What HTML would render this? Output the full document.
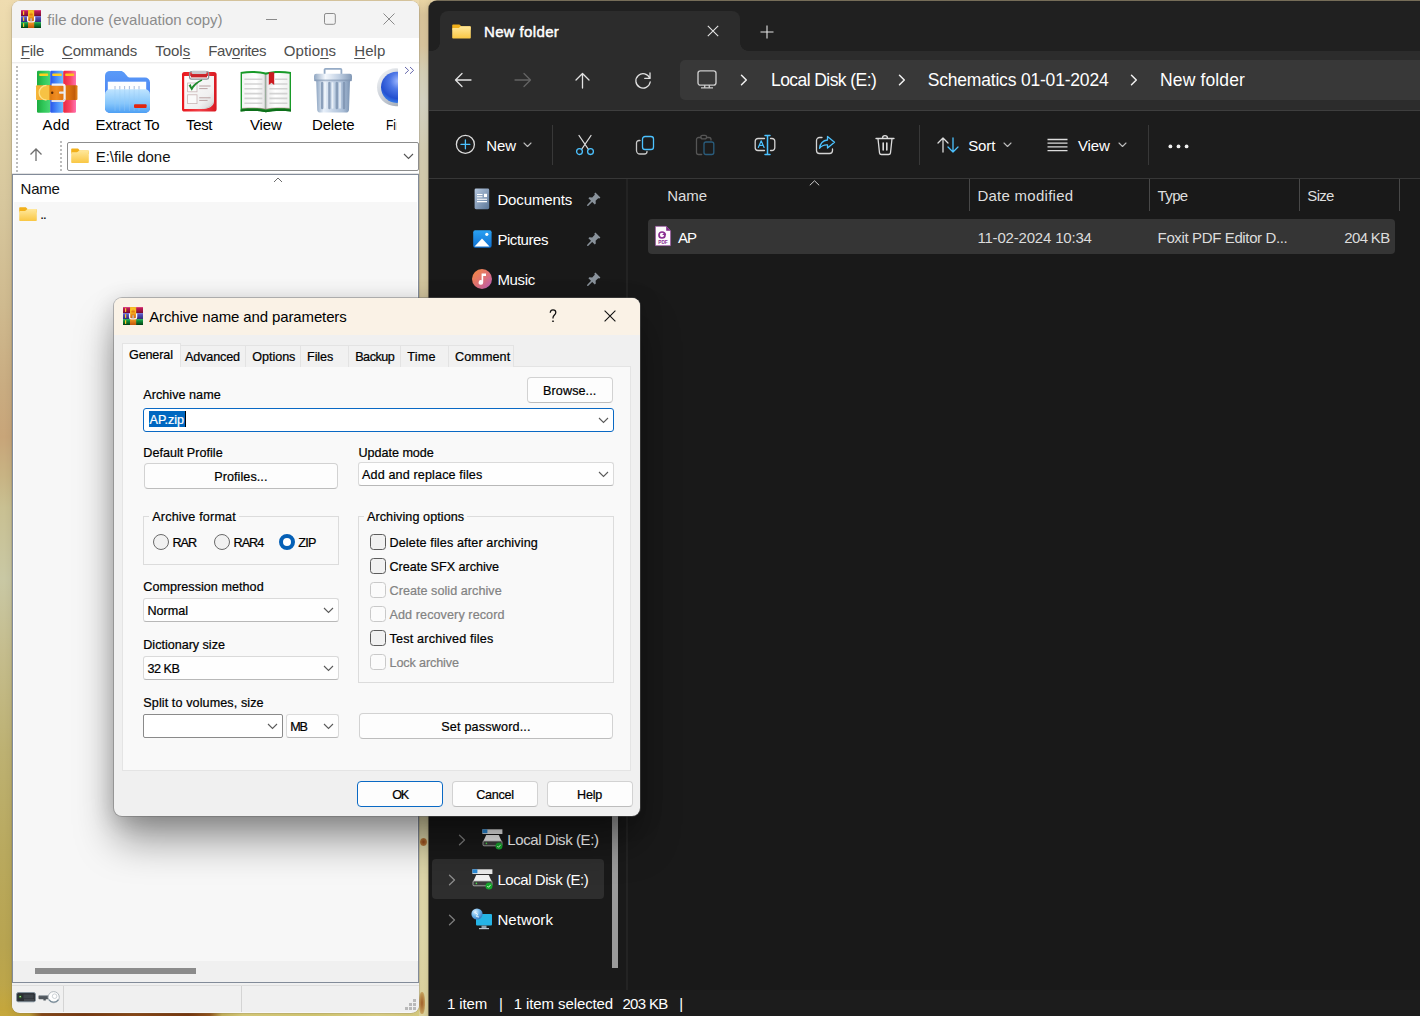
<!DOCTYPE html>
<html><head><meta charset="utf-8"><title>screen</title>
<style>
*{box-sizing:border-box;margin:0;padding:0}
html,body{width:1420px;height:1016px;overflow:hidden;background:#1a1a1a}
body{position:relative;font-family:"Liberation Sans",sans-serif;}
.a{position:absolute}
.t{position:absolute;white-space:pre;line-height:20px;height:20px;font-family:"Liberation Sans",sans-serif;}
.t u{text-decoration:underline;text-underline-offset:2px;text-decoration-thickness:1px}
svg{position:absolute;overflow:visible}
.btn{position:absolute;background:#fdfdfd;border:1px solid #d2d2d2;border-bottom-color:#bdbdbd;border-radius:4px}
.cmb{position:absolute;background:#fefefe;border:1px solid #dadada;border-bottom-color:#b8b8b8;border-radius:3px}
.cb{position:absolute;width:15.500px;height:15.500px;border:1px solid #5c5c5c;border-radius:3.5px;background:#f1f1f1}
.cb.d{border-color:#c9c9c9;background:#fbfbfb}
.rd{position:absolute;width:16px;height:16px;border:1px solid #6a6a6a;border-radius:50%;background:#f1f1f1}
.grp{position:absolute;border:1px solid #dcdcdc}
.tab{position:absolute;top:345px;height:22px;background:#f1f1f1;border:1px solid #e3e3e3;border-bottom:none}
.vd{position:absolute;width:1px;background:#484848}
</style></head><body>

<!-- wallpaper -->
<div class="a" style="left:0;top:0;width:1420px;height:1016px;background:linear-gradient(180deg,#efdcb0 0%,#e8d8aa 6%,#decfa4 12%,#d7c79d 20%,#cfba8f 30%,#c9ac81 38%,#c8a579 43%,#c8b484 47%,#c9c092 50%,#c9c8a4 57%,#c5bd8e 64%,#bdb172 74%,#b9a95e 84%,#b8a450 93%,#bea648 98%,#c4a840 100%)"></div>
<div class="a" style="left:419px;top:0;width:12px;height:1016px;background:linear-gradient(180deg,#e8d4a4 0%,#dcc79c 1.500%,#dcc8a0 4.500%,#d8d2b8 7%,#d8d6c6 10%,#d6cfb4 15%,#d6c8a0 29%,#d8cca0 60%,#e0d9ac 81%,#e2daac 92%,#ded49e 100%)"></div>
<div class="a" style="left:0;top:1008px;width:419px;height:8px;background:linear-gradient(90deg,#c6a83c 0,#c2a23a 7%,#8a4a1a 10%,#7c3c12 20%,#8c4a18 32%,#7a3a10 45%,#96561e 50%,#c8b45c 53%,#dccf7c 58%,#d8cc74 75%,#e0d488 90%,#d8cc80 100%)"></div><div class="a" style="left:0;top:985px;width:12px;height:26px;background:linear-gradient(180deg,rgba(190,160,60,0),#c4a63c)"></div>
<div class="a" style="left:420px;top:838px;width:7px;height:8px;border-radius:50%;background:radial-gradient(#9a4a1c,#b8783a 60%,rgba(200,170,110,0) 100%)"></div><div class="a" style="left:419px;top:992px;width:6px;height:22px;border-radius:40%;background:radial-gradient(#a4602a,#c49a56 60%,rgba(210,190,130,0) 100%)"></div>
<svg width="0" height="0" style="left:-10px;top:-10px"><defs>
  <linearGradient id="gFold" x1="0" y1="0" x2="0" y2="1"><stop offset="0" stop-color="#ffe89c"/><stop offset="1" stop-color="#f9c744"/></linearGradient>
  <g id="fold"><path d="M1 .4h5.300c.4 0 .7.150 1 .45L8.800 2.400H17a.8.800 0 0 1 .8.800V6H.2V1.200A.8.800 0 0 1 1 .4z" fill="#f2b01a"/><path d="M.2 5.100c0-.5.400-.9.900-.9h4.700c.4 0 .7-.150 1-.45l1.100-1.050c.3-.3.600-.45 1-.45H17a.8.800 0 0 1 .8.800v11.150a.8.800 0 0 1-.8.800H1a.8.800 0 0 1-.8-.8z" fill="url(#gFold)"/></g>
  <linearGradient id="rk1" x1="0" y1="0" x2="0" y2="1"><stop offset="0" stop-color="#e2508e"/><stop offset=".25" stop-color="#bb1a54"/><stop offset=".8" stop-color="#8a1038"/><stop offset="1" stop-color="#6e0c2c"/></linearGradient>
  <linearGradient id="rk2" x1="0" y1="0" x2="0" y2="1"><stop offset="0" stop-color="#7471d6"/><stop offset=".35" stop-color="#4d4bb6"/><stop offset="1" stop-color="#302e78"/></linearGradient>
  <linearGradient id="rk3" x1="0" y1="0" x2="0" y2="1"><stop offset="0" stop-color="#36bc64"/><stop offset=".3" stop-color="#10903e"/><stop offset=".8" stop-color="#07581f"/><stop offset="1" stop-color="#033a12"/></linearGradient>
  <linearGradient id="rk4" x1="0" y1="0" x2="0" y2="1"><stop offset="0" stop-color="#f2b828"/><stop offset=".35" stop-color="#ee9a1c"/><stop offset=".6" stop-color="#d86c0e"/><stop offset=".75" stop-color="#e88c1e"/><stop offset="1" stop-color="#c4560c"/></linearGradient>
  <g id="rarico">
    <rect x="0" y="0" width="20" height="6.100" fill="url(#rk1)"/>
    <rect x="0" y="6.100" width="20" height="5.900" fill="url(#rk2)"/>
    <rect x="0" y="12" width="20" height="6" fill="url(#rk3)"/>
    <rect x="2" y="1.200" width="1.200" height="3.700" fill="#ffc928"/><rect x="2" y="7.200" width="1.200" height="3.700" fill="#ffc928"/><rect x="2" y="13.200" width="1.200" height="3.700" fill="#ffc928"/>
    <rect x="7" y="0" width="6.200" height="18" fill="url(#rk4)"/>
    <path d="M7.300 6.400V3.600a2.800 2.800 0 0 1 5.600 0v2.800z" fill="#fac428"/><path d="M8.300 6.400V4.200a1.800 1.800 0 0 1 3.600 0v2.200z" fill="#f09a1a"/>
    <path d="M8.600 4.200h3v1h-3z" fill="#e07a10"/>
    <path d="M6.600 6.600v3.600a1.600 1.600 0 0 0 1.600 1.600h3.800a1.600 1.600 0 0 0 1.600-1.600V6.600" fill="none" stroke="#fbfbfd" stroke-width="1.300"/>
    <rect x="9.400" y="8.300" width="1.400" height="3.200" rx=".5" fill="#b9bcc8"/>
  </g>
</defs></svg>

<!-- ================= WinRAR main window ================= -->
<div class="a" id="wr" style="left:12px;top:1px;width:407px;height:1011.700px;border-radius:8px;background:#f8f8f8;box-shadow:0 0 0 .6px rgba(120,110,90,.38),0 2px 9px rgba(0,0,0,.09);overflow:hidden">
  <div class="a" style="left:0;top:0;width:407px;height:37px;background:#f3f3f3"></div>
  <div class="a" style="left:0;top:37px;width:407px;height:25px;background:#fff"></div>
  <div class="a" style="left:0;top:61px;width:407px;height:1px;background:#eeeeee"></div>
  <div class="a" style="left:0;top:63px;width:407px;height:109px;background:#fff"></div>
  <!-- separator + list frame -->
  <div class="a" style="left:0;top:171.500px;width:407px;height:1px;background:#e2e2e2"></div>
  <div class="a" style="left:0;top:173px;width:406.500px;height:809px;background:#fff;border:1px solid #828b99"></div>
  <!-- list body rows bg -->
  <div class="a" style="left:2px;top:201px;width:402.700px;height:759px;background:#f7f7f7"></div>
  <!-- h scrollbar -->
  <div class="a" style="left:1px;top:960px;width:404.500px;height:21px;background:#f0f0f0"></div>
  <div class="a" style="left:23px;top:966.700px;width:161px;height:6px;background:#8b8b8b"></div>
  <!-- status bar -->
  <div class="a" style="left:0;top:982px;width:407px;height:29px;background:#f0f0f0"></div>
  <div class="a" style="left:0;top:983.500px;width:407px;height:1px;background:#dedede"></div>
  <div class="a" style="left:51px;top:985px;width:1px;height:25.500px;background:#d4d4d4"></div>
  <div class="a" style="left:229px;top:985px;width:1px;height:25.500px;background:#d4d4d4"></div>
</div>
<!-- title bar icon + caption buttons -->
<svg style="left:21px;top:10px" width="20" height="18" viewBox="0 0 20 18"><use href="#rarico"/></svg>
<svg style="left:265px;top:12px" width="140" height="14" viewBox="0 0 140 14" fill="none" stroke="#8a8a8a" stroke-width="1">
  <path d="M1 7.5H12"/><rect x="59.500" y="1.500" width="10.800" height="10.800" rx="1.600"/><path d="M118.5 1.5l11 11M129.500 1.5l-11 11"/>
</svg>
<!-- grippers -->
<div class="a" style="left:16px;top:66px;width:2px;height:106px;background:repeating-linear-gradient(180deg,#bdbdbd 0 2px,transparent 2px 4px)"></div>
<div class="a" style="left:60px;top:141px;width:2px;height:30px;background:repeating-linear-gradient(180deg,#bdbdbd 0 2px,transparent 2px 4px)"></div>
<!-- toolbar chevron -->
<svg style="left:404px;top:66px" width="12" height="9" viewBox="0 0 12 9" fill="none" stroke="#6668ac" stroke-width="1"><path d="M1 1l3.6 3.4L1 7.800M6 1l3.600 3.400L6 7.800"/></svg>
<!-- Add: books + belt (37..76 x 70.7..112.8) -->
<svg style="left:36px;top:70px" width="42" height="44" viewBox="0 0 42 44">
 <defs>
  <linearGradient id="bkG" x1="0" x2="1"><stop offset="0" stop-color="#1cab3e"/><stop offset=".5" stop-color="#31c85a"/><stop offset="1" stop-color="#4ad676"/></linearGradient>
  <linearGradient id="bkB" x1="0" x2="1"><stop offset="0" stop-color="#2854ea"/><stop offset=".5" stop-color="#488af8"/><stop offset="1" stop-color="#6abcff"/></linearGradient>
  <linearGradient id="bkR" x1="0" x2="1"><stop offset="0" stop-color="#ec2640"/><stop offset=".55" stop-color="#f84666"/><stop offset="1" stop-color="#ff72b2"/></linearGradient>
  <linearGradient id="belt" x1="0" x2="1"><stop offset="0" stop-color="#f6b83a"/><stop offset=".18" stop-color="#f0a22c"/><stop offset=".36" stop-color="#e67c16"/><stop offset=".5" stop-color="#ee8e22"/><stop offset=".62" stop-color="#e47a14"/><stop offset=".8" stop-color="#d9700f"/><stop offset=".93" stop-color="#c25c0a"/><stop offset="1" stop-color="#e88a20"/></linearGradient>
 </defs>
 <rect x="1" y=".8" width="13.200" height="42" rx="1.200" fill="url(#bkG)"/>
 <rect x="14.200" y=".8" width="13" height="42" rx="1.200" fill="url(#bkB)"/>
 <rect x="27.200" y=".8" width="12.800" height="42" rx="1.200" fill="url(#bkR)"/>
 <rect x="3.200" y="3.600" width="9" height="2.400" rx=".8" fill="#ffd21e"/><rect x="16.200" y="3.600" width="9.600" height="2.400" rx=".8" fill="#ffcf22"/><rect x="29.200" y="3.600" width="9" height="2.400" rx=".8" fill="#ffc21e"/>
 <rect x="0" y="15.300" width="41.500" height="14.700" rx="1" fill="url(#belt)"/>
 <path d="M10.500 15.300a7.300 7.300 0 0 0 0 14.700h3V15.300z" fill="#f7c244"/>
 <path d="M10.500 15.300a7.300 7.300 0 0 0 0 14.700" fill="none" stroke="#fde38a" stroke-width="1.300"/>
 <rect x="13.500" y="15.300" width="2" height="14.700" fill="#d9820f" opacity=".55"/>
 <path d="M15.600 14.600h11a2 2 0 0 1 2 2v12.400a2 2 0 0 1-2 2h-11" fill="none" stroke="#f1f1f5" stroke-width="2.200"/><path d="M15.600 31h11a2 2 0 0 0 2-2" fill="none" stroke="#c9c9d2" stroke-width="1" opacity=".8"/>
 <rect x="23" y="21.600" width="5.400" height="2.200" rx=".8" fill="#e6e8ee"/>
 <circle cx="16.200" cy="22.800" r="1.200" fill="#5a2a06"/>
</svg>
<!-- Extract To: blue folder (105..150 x 71..113) -->
<svg style="left:105px;top:70px" width="46" height="44" viewBox="0 0 46 44">
 <defs>
  <linearGradient id="exF" x1="0" y1="0" x2="0" y2="1"><stop offset="0" stop-color="#bfe4ff"/><stop offset=".6" stop-color="#86c6fb"/><stop offset="1" stop-color="#4ea0f4"/></linearGradient>
  <linearGradient id="exB" x1="0" y1="0" x2="0" y2="1"><stop offset="0" stop-color="#5b9bf8"/><stop offset="1" stop-color="#3f73ee"/></linearGradient>
 </defs>
 <path d="M5 .9h10.500c1.600 0 2.600.6 3.600 1.700l3.200 3.600c.9 1 1.800 1.400 3.200 1.400H40a5 5 0 0 1 5 5V38a5 5 0 0 1-5 5H5a5 5 0 0 1-5-5V5.900A5 5 0 0 1 5 .9z" fill="url(#exB)"/>
 <rect x="2.800" y="11.700" width="38.400" height="10" fill="#fdfeff"/>
 <path d="M10 16v5M14.800 16v5M19.600 16v5M24.400 16v5M29.200 16v5M34 16v5" stroke="#9fb4d6" stroke-width=".9"/>
 <path d="M5 19.200h35a5 5 0 0 1 5 5V38a5 5 0 0 1-5 5H5a5 5 0 0 1-5-5V24.200a5 5 0 0 1 5-5z" fill="url(#exF)"/>
 <path d="M10 20v21M14.800 20v21M19.600 20v21M24.400 20v21M29.200 20v21M34 20v21" stroke="#9ccdf6" stroke-width=".7" opacity=".55"/>
 <rect x="29" y="34.200" width="12.600" height="3.800" rx="1" fill="#e2250f"/>
</svg>
<!-- Test: clipboard (182..216.6 x 72..111.6) -->
<svg style="left:181px;top:70px" width="37" height="43" viewBox="0 0 37 43">
 <defs>
  <linearGradient id="tsR" x1="0" x2="1"><stop offset="0" stop-color="#e8161c"/><stop offset=".5" stop-color="#f24048"/><stop offset="1" stop-color="#d81820"/></linearGradient>
  <linearGradient id="tsP" x1="0" y1="0" x2="1" y2="1"><stop offset="0" stop-color="#ffffff"/><stop offset=".7" stop-color="#f0f0f0"/><stop offset="1" stop-color="#cfcfcf"/></linearGradient>
 </defs>
 <rect x="1" y="2" width="34.600" height="39.600" rx="2.600" fill="url(#tsR)"/>
 <path d="M3.200 6h29.800v25.500c0 5-6 7.500-12 7.500H3.200z" fill="url(#tsP)"/>
 <path d="M33 31c-1 5-6 8-13 8 7-1 10-3 13-8z" fill="#c9c9c9"/>
 <rect x="8.600" y="1.600" width="19" height="7.600" rx="1.800" fill="none" stroke="#8f8f96" stroke-width="1.300"/>
 <rect x="10.600" y=".8" width="15" height="3.200" rx="1.200" fill="#c8c8cc"/>
 <rect x="10" y="4.200" width="16" height="3.200" fill="#c8242a"/>
 <rect x="6.600" y="13" width="9.400" height="8.800" fill="#fafafa" stroke="#c9b4b4" stroke-width=".8"/>
 <rect x="6.600" y="24.800" width="9.400" height="8.800" fill="#fafafa" stroke="#c9b4b4" stroke-width=".8"/>
 <path d="M7.600 15.600l3.200 5.200c2-4 5.600-7.800 10.600-10.200l-.8-1.200c-4.400 1.600-7.800 4.400-10 7.600L9.800 14z" fill="#1f8a2c"/>
 <path d="M18.200 16h11.400M18.200 18.600h8.400M18.200 27.800h11.400M18.200 30.400h8.400" stroke="#b59a9a" stroke-width=".9"/>
</svg>
<!-- View: open book (240.5..291 x 71..112) -->
<svg style="left:240px;top:70px" width="52" height="43" viewBox="0 0 52 43">
 <defs>
  <linearGradient id="vwL" x1="0" x2="1"><stop offset="0" stop-color="#f4f4f4"/><stop offset=".6" stop-color="#ffffff"/><stop offset=".92" stop-color="#e6e6e6"/><stop offset="1" stop-color="#a8a8a8"/></linearGradient>
  <linearGradient id="vwR" x1="0" x2="1"><stop offset="0" stop-color="#b4b4b4"/><stop offset=".08" stop-color="#ececec"/><stop offset=".4" stop-color="#ffffff"/><stop offset="1" stop-color="#f0f0f0"/></linearGradient>
 </defs>
 <path d="M.6 2c8-1.500 18-1.500 25.200.6C33 .5 43 .5 51 2v39.400c-8-.6-18-.8-25.200.8C18.600 40.600 8.600 40.800.6 41.400z" fill="#189a28"/>
 <path d="M.6 39.400c8-.6 18-.8 25.200.8 7.200-1.600 17.200-1.400 25.200-.8v2c-8-.6-18-.8-25.200.8C18.600 40.600 8.600 40.800.6 41.400z" fill="#0d6e1a"/>
 <path d="M2 3.800c8-1.200 17-1 23.800 1v34.400C19 37.600 10 37.800 2 38.400z" fill="url(#vwL)"/>
 <path d="M49.600 3.800c-8-1.200-17-1-23.800 1v34.400c6.800-1.600 15.800-1.400 23.800-.8z" fill="url(#vwR)"/>
 <path d="M2 38.400c8-.6 17-.8 23.800.8 6.800-1.600 15.800-1.400 23.800-.8" fill="none" stroke="#8a5a5a" stroke-width=".7" opacity=".7"/>
 <g stroke="#cfcfcf" stroke-width="1.600" opacity=".9"><path d="M4.400 9.200h18M4.400 14h18M4.400 18.800h18M4.400 23.600h18M4.400 28.400h18M4.400 33.200h18"/><path d="M35 9.200h12.400M29.400 14h18M29.400 18.800h18M29.400 23.600h18M29.400 28.400h18M29.400 33.200h18"/></g>
 <path d="M28.800 2.200h5.400V15l-2.700-2.200-2.700 2.200z" fill="#cc1a20"/>
</svg>
<!-- Delete: trash can (314..351.6 x 68.6..112.7) -->
<svg style="left:313px;top:68px" width="40" height="46" viewBox="0 0 40 46">
 <defs>
  <linearGradient id="dlB" x1="0" x2="1"><stop offset="0" stop-color="#8fa6c2"/><stop offset=".22" stop-color="#e8f0fa"/><stop offset=".5" stop-color="#c4d3e6"/><stop offset=".8" stop-color="#a9bdd6"/><stop offset="1" stop-color="#7d95b4"/></linearGradient>
  <linearGradient id="dlL" x1="0" x2="1"><stop offset="0" stop-color="#91a7c2"/><stop offset=".3" stop-color="#f4f8fd"/><stop offset=".65" stop-color="#c2d1e4"/><stop offset="1" stop-color="#8299b6"/></linearGradient>
 </defs>
 <path d="M11.600 6.200V1.800a1 1 0 0 1 1-1h14.800a1 1 0 0 1 1 1v4.400" fill="none" stroke="#95abc6" stroke-width="1.800"/>
 <path d="M3.200 12.800h33.800l-1 29a3 3 0 0 1-3 2.800H7.200a3 3 0 0 1-3-2.800z" fill="url(#dlB)"/>
 <g stroke="#7f95b2" stroke-width="2.400" stroke-linecap="round" opacity=".85"><path d="M9.200 15v25M16.400 15v25M23.800 15v25M31 15v25"/></g>
 <g stroke="#f2f7fc" stroke-width="1.600" stroke-linecap="round" opacity=".8"><path d="M12.200 15v25M19.600 15v25M27 15v25"/></g>
 <rect x="1" y="5.800" width="38" height="7.400" rx="2.200" fill="url(#dlL)"/>
 <rect x="1" y="11.400" width="38" height="1.800" rx=".9" fill="#7a90ae" opacity=".6"/>
</svg>
<!-- Find: blue sphere, clipped at x=398 -->
<svg style="left:376px;top:67px" width="22" height="41" viewBox="0 0 22 41">
 <defs>
  <radialGradient id="fdS" cx=".55" cy=".3" r=".75"><stop offset="0" stop-color="#9fb8ff"/><stop offset=".35" stop-color="#4f78e6"/><stop offset=".75" stop-color="#2450d0"/><stop offset="1" stop-color="#3f8cf0"/></radialGradient>
  <linearGradient id="fdR" x1="0" y1="0" x2="1" y2="1"><stop offset="0" stop-color="#fafbfc"/><stop offset=".5" stop-color="#c3c9d2"/><stop offset="1" stop-color="#9098a4"/></linearGradient>
 </defs>
 <clipPath id="fdC"><rect x="0" y="0" width="22" height="41"/></clipPath>
 <g clip-path="url(#fdC)"><circle cx="20" cy="20.300" r="19" fill="url(#fdR)"/><circle cx="20.600" cy="20.300" r="15.600" fill="url(#fdS)"/></g>
</svg>

<!-- up arrow -->
<svg style="left:28px;top:147px" width="16" height="16" viewBox="0 0 16 16" fill="none" stroke="#6e6e6e" stroke-width="1.3"><path d="M8 14V2.500M2.500 7.500L8 2l5.500 5.500"/></svg>
<!-- address combobox -->
<div class="a" style="left:67px;top:142px;width:351.500px;height:29px;background:#fff;border:1px solid #8d8d8d;border-radius:2px"></div>
<svg style="left:71px;top:148px" width="18" height="15" viewBox="0 0 18 15"><use href="#fold"/></svg>
<svg style="left:403px;top:153px" width="11" height="7" viewBox="0 0 11 7" fill="none" stroke="#555" stroke-width="1.1"><path d="M1 1l4.500 4.500L10 1"/></svg>
<!-- list -->
<svg style="left:273px;top:177px" width="10" height="6" viewBox="0 0 10 6" fill="none" stroke="#6c6c6c" stroke-width="1"><path d="M1 5l4-4 4 4"/></svg>
<svg style="left:19px;top:207px" width="18" height="14" viewBox="0 0 18 15" preserveAspectRatio="none"><use href="#fold"/></svg>
<!-- status icons -->
<svg style="left:16px;top:991.700px" width="20" height="11" viewBox="0 0 20 11"><rect x=".6" y=".6" width="18.800" height="9.200" rx="1.600" fill="#2b2f34" stroke="#8494a0" stroke-width=".9"/><rect x="7.500" y="2.500" width="10" height="4" fill="#434a50" opacity=".8"/><path d="M8 8h10" stroke="#6d777f" stroke-width=".7"/><circle cx="4.200" cy="4.800" r="1.500" fill="#2d6a22"/><circle cx="4.200" cy="4.600" r=".7" fill="#d8ffd0"/></svg>
<svg style="left:38px;top:990px" width="22" height="15" viewBox="0 0 22 15"><path d="M1.500 5.200h9.500v4H7.800v1.300H5.400V9.200H1.500a1 1 0 0 1-1-1V6.200a1 1 0 0 1 1-1z" fill="#50575d"/><path d="M1.200 5.600h9.500" stroke="#aeb6bc" stroke-width=".8"/><circle cx="15.700" cy="7.200" r="5.600" fill="#fdfdfd" stroke="#aab2b8" stroke-width=".9"/><path d="M11 9.600a5.600 5.600 0 0 0 9.400 0" fill="none" stroke="#5e7686" stroke-width="1.300" opacity=".8"/><circle cx="16.600" cy="6.200" r="2.300" fill="#fff" stroke="#b9c0c6" stroke-width=".7"/></svg>
<!-- resize grip -->
<svg style="left:404px;top:999px" width="13" height="12" viewBox="0 0 13 12" fill="#b9b9b9"><rect x="9" y="0" width="3" height="3"/><rect x="5" y="4" width="3" height="3"/><rect x="9" y="4" width="3" height="3"/><rect x="1" y="8" width="3" height="3"/><rect x="5" y="8" width="3" height="3"/><rect x="9" y="8" width="3" height="3"/></svg>
<span class="t" id="t0" style="left:47.30px;top:10.00px;font-size:15px;color:#8c8c8c;letter-spacing:0.007px;">file done (evaluation copy)</span>
<span class="t" id="t1" style="left:20.80px;top:41.00px;font-size:15px;color:#4e4e4e;letter-spacing:-0.247px;"><u>F</u>ile</span>
<span class="t" id="t2" style="left:62.00px;top:41.00px;font-size:15px;color:#4e4e4e;letter-spacing:-0.213px;"><u>C</u>ommands</span>
<span class="t" id="t3" style="left:155.20px;top:41.00px;font-size:15px;color:#4e4e4e;letter-spacing:-0.006px;">Tool<u>s</u></span>
<span class="t" id="t4" style="left:208.30px;top:41.00px;font-size:15px;color:#4e4e4e;letter-spacing:-0.445px;">Fav<u>o</u>rites</span>
<span class="t" id="t5" style="left:283.80px;top:41.00px;font-size:15px;color:#4e4e4e;letter-spacing:0.100px;">Optio<u>n</u>s</span>
<span class="t" id="t6" style="left:354.20px;top:41.00px;font-size:15px;color:#4e4e4e;letter-spacing:0.106px;"><u>H</u>elp</span>
<span class="t" id="t7" style="left:42.40px;top:114.50px;font-size:15px;color:#000;letter-spacing:0.232px;">Add</span>
<span class="t" id="t8" style="left:95.60px;top:114.50px;font-size:15px;color:#000;letter-spacing:-0.262px;">Extract To</span>
<span class="t" id="t9" style="left:186.00px;top:114.50px;font-size:15px;color:#000;letter-spacing:-0.329px;">Test</span>
<span class="t" id="t10" style="left:250.00px;top:114.50px;font-size:15px;color:#000;letter-spacing:-0.162px;">View</span>
<span class="t" id="t11" style="left:312.00px;top:114.50px;font-size:15px;color:#000;letter-spacing:-0.160px;">Delete</span>
<span class="t" id="t12" style="left:386.20px;top:114.50px;font-size:15px;color:#000;width:13.300px;overflow:hidden;transform:scaleX(.8);transform-origin:0 0;">Find</span>
<span class="t" id="t13" style="left:95.70px;top:146.60px;font-size:15px;color:#111;letter-spacing:-0.022px;">E:\file done</span>
<span class="t" id="t14" style="left:20.60px;top:179.40px;font-size:15px;color:#111;letter-spacing:-0.229px;">Name</span>
<span class="t" id="t15" style="left:39.90px;top:204.40px;font-size:15px;color:#111;letter-spacing:-1.372px;">..</span>

<!-- ================= Explorer (dark) ================= -->
<div class="a" id="ex" style="left:429px;top:1px;width:1000px;height:1030px;border-radius:8px 0 0 0;background:#191919;box-shadow:0 0 0 .8px rgba(40,38,32,.75),0 0 7px rgba(0,0,0,.2);overflow:hidden">
  <div class="a" style="left:0;top:0;width:1000px;height:50px;background:#202020"></div>
  <!-- active tab -->
  <div class="a" style="left:11px;top:10px;width:300px;height:41px;background:#2c2c2c;border-radius:8px 8px 0 0"></div>
  <div class="a" style="left:3px;top:42px;width:8px;height:8px;background:radial-gradient(circle at 0 0,#202020 7.500px,#2c2c2c 8px)"></div>
  <div class="a" style="left:311px;top:42px;width:8px;height:8px;background:radial-gradient(circle at 100% 0,#202020 7.500px,#2c2c2c 8px)"></div>
  <!-- nav row -->
  <div class="a" style="left:0;top:49.500px;width:1000px;height:59.500px;background:#2c2c2c"></div>
  <div class="a" style="left:251px;top:59px;width:760px;height:40px;background:#383838;border-radius:5px"></div>
  <div class="a" style="left:0;top:109px;width:1000px;height:1px;background:#3e3e3e"></div>
  <!-- command bar -->
  <div class="a" style="left:0;top:110px;width:1000px;height:67px;background:#1c1c1c"></div>
  <div class="a" style="left:0;top:177px;width:1000px;height:1px;background:#373737"></div>
  <!-- nav pane / content split -->
  <div class="a" style="left:197px;top:178px;width:2px;height:811px;background:#232323"></div>
  <!-- selected nav item -->
  <div class="a" style="left:3px;top:858px;width:172px;height:40px;background:#2e2e2e;border-radius:4px"></div>
  <!-- nav scrollbar -->
  <div class="a" style="left:183px;top:700px;width:6px;height:267px;background:#9a9a9a"></div>
  <!-- selected file row -->
  <div class="a" style="left:219px;top:218px;width:747px;height:35px;background:#353535;border-radius:4px"></div>
  <!-- header column dividers -->
  <div class="vd" style="left:540px;top:178px;height:32px"></div>
  <div class="vd" style="left:720px;top:178px;height:32px"></div>
  <div class="vd" style="left:870px;top:178px;height:32px"></div>
  <div class="vd" style="left:970px;top:178px;height:32px"></div>
  <!-- status bar -->
  <div class="a" style="left:0;top:989px;width:1000px;height:30px;background:#1c1c1c"></div>
  <!-- command bar dividers -->
  <div class="vd" style="left:123px;top:124px;height:40px;background:#383838"></div>
  <div class="vd" style="left:490px;top:124px;height:40px;background:#383838"></div>
  <div class="vd" style="left:719px;top:124px;height:40px;background:#383838"></div>
</div>
<!-- tab folder -->
<svg style="left:452px;top:24px" width="19" height="14.500" viewBox="0 0 18 15" preserveAspectRatio="none"><use href="#fold"/></svg>
<!-- tab close / new tab -->
<svg style="left:707px;top:25px" width="12" height="12" viewBox="0 0 12 12" fill="none" stroke="#e4e4e4" stroke-width="1.100"><path d="M.8.800l10.400 10.400M11.200.8L.8 11.200"/></svg>
<svg style="left:760px;top:25px" width="14" height="14" viewBox="0 0 14 14" fill="none" stroke="#e4e4e4" stroke-width="1.100"><path d="M7 .5v13M.5 7h13"/></svg>
<!-- nav arrows -->
<svg style="left:454px;top:72px" width="18" height="16" viewBox="0 0 18 16" fill="none" stroke="#e2e2e2" stroke-width="1.300" stroke-linecap="round" stroke-linejoin="round"><path d="M17 8H1.500M8 1.500L1.500 8 8 14.500"/></svg>
<svg style="left:514px;top:72px" width="18" height="16" viewBox="0 0 18 16" fill="none" stroke="#636363" stroke-width="1.300" stroke-linecap="round" stroke-linejoin="round"><path d="M1 8h15.500M10 1.500L16.500 8 10 14.500"/></svg>
<svg style="left:574px;top:72px" width="17" height="17" viewBox="0 0 17 17" fill="none" stroke="#e2e2e2" stroke-width="1.300" stroke-linecap="round" stroke-linejoin="round"><path d="M8.500 16V1.500M2 8L8.500 1.500 15 8"/></svg>
<svg style="left:634px;top:71px" width="18" height="18" viewBox="0 0 18 18" fill="none" stroke="#e2e2e2" stroke-width="1.300" stroke-linecap="round" stroke-linejoin="round"><path d="M15.800 7.200A7.200 7.200 0 1 0 16.200 11"/><path d="M16 2v5.300h-5.300"/></svg>
<!-- PC icon -->
<svg style="left:697px;top:70px" width="20" height="19" viewBox="0 0 20 19" fill="none" stroke="#c9c9c9" stroke-width="1.400" stroke-linejoin="round"><rect x="1" y=".9" width="18" height="14.200" rx="2.400"/><path d="M7.700 15.100v2.600M12.300 15.100v2.600M4 17.900h12"/></svg>
<!-- breadcrumb chevrons -->
<svg style="left:740px;top:74px" width="8" height="12" viewBox="0 0 8 12" fill="none" stroke="#f2f2f2" stroke-width="1.500" stroke-linecap="round" stroke-linejoin="round"><path d="M1.500 1.300L6.300 6 1.500 10.700"/></svg>
<svg style="left:898px;top:74px" width="8" height="12" viewBox="0 0 8 12" fill="none" stroke="#f2f2f2" stroke-width="1.500" stroke-linecap="round" stroke-linejoin="round"><path d="M1.500 1.300L6.300 6 1.500 10.700"/></svg>
<svg style="left:1130px;top:74px" width="8" height="12" viewBox="0 0 8 12" fill="none" stroke="#f2f2f2" stroke-width="1.500" stroke-linecap="round" stroke-linejoin="round"><path d="M1.500 1.300L6.300 6 1.500 10.700"/></svg>
<!-- New (+) -->
<svg style="left:455px;top:134px" width="21" height="21" viewBox="0 0 21 21" fill="none" stroke-width="1.300"><circle cx="10.400" cy="10.400" r="9" stroke="#dcdcdc"/><path d="M10.400 6v8.800M6 10.400h8.800" stroke="#4cc2ff" stroke-linecap="round"/></svg>
<svg style="left:523px;top:142px" width="9" height="6" viewBox="0 0 9 6" fill="none" stroke="#bdbdbd" stroke-width="1.100" stroke-linecap="round" stroke-linejoin="round"><path d="M1 1l3.500 3.500L8 1"/></svg>
<!-- cut -->
<svg style="left:575px;top:134px" width="20" height="22" viewBox="0 0 20 22" fill="none" stroke-width="1.300" stroke-linecap="round"><path d="M4 1.500L13.500 15.500M16 1.500L6.500 15.500" stroke="#dcdcdc"/><circle cx="4.500" cy="17.600" r="2.900" stroke="#4cc2ff"/><circle cx="15.500" cy="17.600" r="2.900" stroke="#4cc2ff"/></svg>
<!-- copy -->
<svg style="left:635px;top:135px" width="20" height="20" viewBox="0 0 20 20" fill="none" stroke-width="1.300" stroke-linejoin="round"><path d="M5 5.500H4A2.500 2.500 0 0 0 1.500 8v7.500A3.500 3.500 0 0 0 5 19h4.500a2.500 2.500 0 0 0 2.500-2.500" stroke="#c8c8c8" stroke-linecap="round"/><rect x="7.500" y="1.500" width="11" height="13" rx="2.600" stroke="#4cc2ff"/></svg>
<!-- paste (disabled) -->
<svg style="left:695px;top:134px" width="21" height="22" viewBox="0 0 21 22" fill="none" stroke-width="1.300" stroke-linejoin="round"><path d="M6 3.500H3.500A2 2 0 0 0 1.500 5.500v13a2 2 0 0 0 2 2h3.200M11.500 3.500H14a2 2 0 0 1 2 2V6" stroke="#555" stroke-linecap="round"/><rect x="5.800" y="1.300" width="5.800" height="3.600" rx="1.600" stroke="#555"/><rect x="9" y="8" width="9.800" height="12.500" rx="2" stroke="#2a5d7d"/></svg>
<!-- rename -->
<svg style="left:754px;top:134px" width="22" height="22" viewBox="0 0 22 22" fill="none" stroke-width="1.300" stroke-linecap="round" stroke-linejoin="round"><path d="M10.500 4.500H4A2.800 2.800 0 0 0 1.200 7.300v6.400A2.800 2.800 0 0 0 4 16.500h6.500M16.500 4.500H18a2.800 2.800 0 0 1 2.800 2.800v6.400A2.800 2.800 0 0 1 18 16.500h-1.500" stroke="#d4d4d4"/><path d="M13.500 1.500v19M11 1.500h5M11 20.500h5" stroke="#4cc2ff" stroke-width="1.500"/><path d="M4.300 13.500L7.200 6.800l2.900 6.700M5.300 11.300h3.800" stroke="#4cc2ff" stroke-width="1.200"/></svg>
<!-- share -->
<svg style="left:815px;top:135px" width="21" height="20" viewBox="0 0 21 20" fill="none" stroke-width="1.300" stroke-linecap="round" stroke-linejoin="round"><path d="M7 2.500H4.500A3 3 0 0 0 1.500 5.500v10a3 3 0 0 0 3 3h10a3 3 0 0 0 3-3V14" stroke="#d4d4d4"/><path d="M12.500 1.500l7 5.800-7 5.800V9.800c-3.500-.2-6 .8-8 3.500.6-4.500 3.500-7.800 8-8.300z" stroke="#4cc2ff"/></svg>
<!-- delete -->
<svg style="left:875px;top:134px" width="20" height="22" viewBox="0 0 20 22" fill="none" stroke="#dcdcdc" stroke-width="1.300" stroke-linecap="round" stroke-linejoin="round"><path d="M1 4.500h18M7.500 4.200a2.500 2.500 0 0 1 5 0M3 4.800l1.500 14a2 2 0 0 0 2 1.700h7a2 2 0 0 0 2-1.700L17 4.800"/><path d="M8.200 9v7M11.800 9v7" stroke-width="1.600"/></svg>
<!-- sort -->
<svg style="left:937px;top:137px" width="22" height="16" viewBox="0 0 22 16" fill="none" stroke-width="1.300" stroke-linecap="round" stroke-linejoin="round"><path d="M6 15V1M1 6l5-5 5 5" stroke="#dcdcdc"/><path d="M16 1v14M11 10l5 5 5-5" stroke="#4cc2ff"/></svg>
<svg style="left:1003px;top:142px" width="9" height="6" viewBox="0 0 9 6" fill="none" stroke="#bdbdbd" stroke-width="1.100" stroke-linecap="round" stroke-linejoin="round"><path d="M1 1l3.500 3.500L8 1"/></svg>
<!-- view -->
<svg style="left:1047px;top:138px" width="21" height="14" viewBox="0 0 21 14" stroke="#dcdcdc" stroke-width="1.300"><path d="M.5 1.500h20M.5 5.200h20M.5 8.900h20M.5 12.600h20"/></svg>
<svg style="left:1118px;top:142px" width="9" height="6" viewBox="0 0 9 6" fill="none" stroke="#bdbdbd" stroke-width="1.100" stroke-linecap="round" stroke-linejoin="round"><path d="M1 1l3.500 3.500L8 1"/></svg>
<!-- more -->
<svg style="left:1168px;top:144px" width="22" height="5" viewBox="0 0 22 5" fill="#f0f0f0"><circle cx="2.400" cy="2.400" r="1.900"/><circle cx="10.500" cy="2.400" r="1.900"/><circle cx="18.600" cy="2.400" r="1.900"/></svg>
<!-- nav pane: Documents -->
<svg style="left:474px;top:188px" width="16" height="22" viewBox="0 0 16 22"><defs><linearGradient id="docG" x1="0" y1="0" x2="1" y2="1"><stop offset="0" stop-color="#b7c9e0"/><stop offset="1" stop-color="#5b7697"/></linearGradient></defs><rect x=".6" y=".6" width="14.600" height="20.600" rx="1.400" fill="url(#docG)"/><path d="M3 6.500h5.500M3 8.800h5.500M3 11.200h10M3 13.600h10" stroke="#fff" stroke-width="1.100"/><rect x="10" y="5.800" width="3" height="3.300" fill="#fff"/></svg>
<!-- Pictures -->
<svg style="left:473px;top:230px" width="19" height="18" viewBox="0 0 19 18"><defs><linearGradient id="picG" x1="0" y1="0" x2="0" y2="1"><stop offset="0" stop-color="#2aa2f4"/><stop offset="1" stop-color="#0f6fd0"/></linearGradient></defs><rect x=".2" y=".2" width="18.400" height="17.600" rx="2" fill="url(#picG)"/><path d="M1.500 16.500L9 8.500l7.500 8z" fill="#fff"/><circle cx="13.800" cy="4.300" r="1.600" fill="#fff"/></svg>
<!-- Music -->
<svg style="left:472px;top:269px" width="20" height="20" viewBox="0 0 20 20"><defs><linearGradient id="musG" x1="0" y1="0" x2="1" y2="1"><stop offset="0" stop-color="#f58a3c"/><stop offset=".55" stop-color="#de7078"/><stop offset="1" stop-color="#b45cc0"/></linearGradient></defs><circle cx="10" cy="10" r="10" fill="url(#musG)"/><path d="M9.600 4.500h4.400v2.600h-2.800v6.400a2.300 2.300 0 1 1-1.600-2.200z" fill="#fff"/></svg>
<!-- pins -->
<svg style="left:587px;top:192px" width="14" height="14" viewBox="0 0 14 14"><g id="pin"><path d="M8.400.6l5 5-1 1-1.200-.4-2.600 2.600.2 2.800-1 1L1.400 6.200l1-1 2.800.2L7.800 2.800 7.400 1.600z" fill="#89929b"/><path d="M4.600 9.400L.8 13.200" stroke="#89929b" stroke-width="1.500" stroke-linecap="round"/></g></svg>
<svg style="left:587px;top:232px" width="14" height="14" viewBox="0 0 14 14"><use href="#pin"/></svg>
<svg style="left:587px;top:272px" width="14" height="14" viewBox="0 0 14 14"><use href="#pin"/></svg>
<!-- disks -->
<svg style="left:481.500px;top:828.500px" width="22" height="21" viewBox="0 0 22 21"><g id="disk"><rect x=".4" y=".3" width="20" height="4.700" fill="#ececec"/><rect x=".4" y=".3" width="5" height="3.900" fill="#2b8bd6"/><path d="M4.200 6h12.600l2.800 6.200H1.400z" fill="#f2f2f2"/><rect x="1" y="12" width="19" height="4.800" rx="1" fill="#3c3c3c" stroke="#bdbdbd" stroke-width=".8"/><circle cx="4.400" cy="14.400" r=".8" fill="#4ade4a"/><circle cx="17" cy="17" r="3.500" fill="#16a52c"/><path d="M15.300 17l1.200 1.300 2.200-2.500" fill="none" stroke="#d8ffd8" stroke-width=".9"/></g></svg>
<svg style="left:471.500px;top:868.500px" width="22" height="21" viewBox="0 0 22 21"><use href="#disk"/></svg>
<!-- network -->
<svg style="left:471px;top:908px" width="22" height="22" viewBox="0 0 22 22"><defs><radialGradient id="glb" cx=".35" cy=".3" r=".8"><stop offset="0" stop-color="#dff1ff"/><stop offset=".5" stop-color="#6db4ea"/><stop offset="1" stop-color="#2d6fb8"/></radialGradient></defs><rect x="5" y="6" width="16" height="11.600" rx="1" fill="#25b4e6"/><path d="M10.500 17.600h5v2.600h-5z" fill="#8fa0ad"/><path d="M8 20.600h10" stroke="#b8c4ce" stroke-width="1.200"/><circle cx="6" cy="6" r="5.600" fill="url(#glb)"/><path d="M3.500 4.500l3 1.500-1 2.500 2.500.5" fill="none" stroke="#f2faff" stroke-width="1" opacity=".9"/></svg>
<!-- tree chevrons -->
<svg style="left:457.500px;top:834px" width="8" height="12" viewBox="0 0 8 12" fill="none" stroke="#7c7c7c" stroke-width="1.300" stroke-linecap="round" stroke-linejoin="round"><path d="M1.500 1.200L6.500 6 1.500 10.800"/></svg>
<svg style="left:447.500px;top:874px" width="8" height="12" viewBox="0 0 8 12" fill="none" stroke="#8c8c8c" stroke-width="1.300" stroke-linecap="round" stroke-linejoin="round"><path d="M1.500 1.200L6.500 6 1.500 10.800"/></svg>
<svg style="left:447.500px;top:914px" width="8" height="12" viewBox="0 0 8 12" fill="none" stroke="#7c7c7c" stroke-width="1.300" stroke-linecap="round" stroke-linejoin="round"><path d="M1.500 1.200L6.500 6 1.500 10.800"/></svg>
<!-- sort caret in header -->
<svg style="left:809px;top:180px" width="11" height="6" viewBox="0 0 11 6" fill="none" stroke="#cfcfcf" stroke-width="1"><path d="M.8 5.300L5.500.8l4.700 4.500"/></svg>
<!-- pdf icon -->
<svg style="left:655px;top:226px" width="16" height="20" viewBox="0 0 16 20"><path d="M.4.300h10.800l4.400 4.400v15H.4z" fill="#fdfbfd"/><path d="M11.200.3l4.400 4.400h-4.400z" fill="#7d2a86"/><path d="M.4.300h10.800l4.400 4.400v15H.4z" fill="none" stroke="#8a2f92" stroke-width=".6"/><circle cx="7" cy="9" r="3" fill="none" stroke="#8a2f92" stroke-width="1.700"/><path d="M7 9h4.200l-1.200-2.800" fill="#8a2f92"/><text x="3.200" y="18" font-family="Liberation Sans" font-size="4.800" font-weight="700" fill="#8a2f92">PDF</text></svg>

<span class="t" id="t16" style="left:484.00px;top:21.80px;font-size:15px;color:#ffffff;letter-spacing:0.350px;-webkit-text-stroke:0.45px #fff;">New folder</span>
<span class="t" id="t17" style="left:771.00px;top:69.64px;font-size:17.5px;color:#ffffff;letter-spacing:-0.572px;">Local Disk (E:)</span>
<span class="t" id="t18" style="left:927.70px;top:69.64px;font-size:17.5px;color:#ffffff;letter-spacing:-0.192px;">Schematics 01-01-2024</span>
<span class="t" id="t19" style="left:1160.00px;top:69.64px;font-size:17.5px;color:#ffffff;letter-spacing:0.134px;">New folder</span>
<span class="t" id="t20" style="left:486.20px;top:135.50px;font-size:15px;color:#ffffff;letter-spacing:-0.072px;">New</span>
<span class="t" id="t21" style="left:968.20px;top:135.50px;font-size:15px;color:#ffffff;letter-spacing:-0.129px;">Sort</span>
<span class="t" id="t22" style="left:1078.00px;top:135.50px;font-size:15px;color:#ffffff;letter-spacing:-0.162px;">View</span>
<span class="t" id="t23" style="left:497.40px;top:189.90px;font-size:15px;color:#ffffff;letter-spacing:-0.119px;">Documents</span>
<span class="t" id="t24" style="left:497.40px;top:229.90px;font-size:15px;color:#ffffff;letter-spacing:-0.448px;">Pictures</span>
<span class="t" id="t25" style="left:497.40px;top:269.90px;font-size:15px;color:#ffffff;letter-spacing:-0.314px;">Music</span>
<span class="t" id="t26" style="left:667.20px;top:186.30px;font-size:15px;color:#dedede;letter-spacing:-0.054px;">Name</span>
<span class="t" id="t27" style="left:977.40px;top:186.30px;font-size:15px;color:#dedede;letter-spacing:0.264px;">Date modified</span>
<span class="t" id="t28" style="left:1157.60px;top:186.30px;font-size:15px;color:#dedede;letter-spacing:-0.633px;">Type</span>
<span class="t" id="t29" style="left:1307.30px;top:186.30px;font-size:15px;color:#dedede;letter-spacing:-0.672px;">Size</span>
<span class="t" id="t30" style="left:678.10px;top:227.80px;font-size:15px;color:#ffffff;letter-spacing:-1.208px;">AP</span>
<span class="t" id="t31" style="left:977.40px;top:227.80px;font-size:15px;color:#dcdcdc;letter-spacing:-0.183px;">11-02-2024 10:34</span>
<span class="t" id="t32" style="left:1157.60px;top:227.80px;font-size:15px;color:#dcdcdc;letter-spacing:-0.368px;">Foxit PDF Editor D...</span>
<span class="t" id="t33" style="left:1344.30px;top:227.80px;font-size:15px;color:#dcdcdc;letter-spacing:-0.670px;">204 KB</span>
<span class="t" id="t34" style="left:507.30px;top:829.80px;font-size:15px;color:#ffffff;letter-spacing:-0.422px;">Local Disk (E:)</span>
<span class="t" id="t35" style="left:497.40px;top:869.80px;font-size:15px;color:#ffffff;letter-spacing:-0.435px;">Local Disk (E:)</span>
<span class="t" id="t36" style="left:497.40px;top:909.80px;font-size:15px;color:#ffffff;letter-spacing:0.083px;">Network</span>
<span class="t" id="t37" style="left:447.00px;top:994.40px;font-size:15px;color:#ffffff;letter-spacing:-0.110px;">1 item</span>
<span class="t" id="t38" style="left:499.00px;top:993.80px;font-size:15px;color:#ffffff;">|</span>
<span class="t" id="t39" style="left:513.70px;top:994.40px;font-size:15px;color:#ffffff;letter-spacing:-0.099px;">1 item selected</span>
<span class="t" id="t40" style="left:622.40px;top:994.40px;font-size:15px;color:#ffffff;letter-spacing:-0.670px;">203 KB</span>
<span class="t" id="t41" style="left:679.30px;top:993.80px;font-size:15px;color:#ffffff;">|</span>

<!-- ================= Archive name and parameters dialog ================= -->
<div class="a" id="dlg" style="left:114px;top:298px;width:526px;height:517.500px;border-radius:8px;background:#f0f0f0;box-shadow:0 0 0 1px rgba(100,100,100,.42),0 26px 40px -2px rgba(0,0,0,.40),0 4px 22px 2px rgba(0,0,0,.15);overflow:hidden">
  <div class="a" style="left:0;top:0;width:526px;height:37px;background:#faf2e6"></div>
  <!-- tab panel -->
  <div class="a" style="left:8px;top:68px;width:509px;height:405px;background:#f9f9f9;border:1px solid #e4e4e4"></div>
</div>
<!-- tabs -->
<div class="tab" style="left:180px;width:66px"></div>
<div class="tab" style="left:245px;width:56px"></div>
<div class="tab" style="left:300px;width:49px"></div>
<div class="tab" style="left:348px;width:53px"></div>
<div class="tab" style="left:400px;width:49px"></div>
<div class="tab" style="left:448px;width:66px"></div>
<div class="a" style="left:122px;top:343px;width:59px;height:24px;background:#f9f9f9;border:1px solid #e4e4e4;border-bottom:none"></div>
<!-- title icon & buttons -->
<svg style="left:123px;top:307px" width="20" height="18" viewBox="0 0 20 18"><use href="#rarico"/></svg>
<svg style="left:604px;top:310px" width="12" height="12" viewBox="0 0 12 12" fill="none" stroke="#111" stroke-width="1.100"><path d="M.6.600l10.800 10.800M11.400.6L.6 11.400"/></svg>
<svg style="left:549px;top:309px" width="8" height="14" viewBox="0 0 8 14" fill="none" stroke="#111" stroke-width="1.250"><path d="M1.200 3.700C1.400 1.900 2.600.9 4 .9c1.600 0 2.800 1.100 2.800 2.600 0 2.400-2.800 2.700-2.800 5.200v.9"/><circle cx="4" cy="12.200" r=".5" fill="#111" stroke-width=".9"/></svg>
<!-- Browse button -->
<div class="btn" style="left:527px;top:377px;width:86px;height:26px"></div>
<!-- archive name combobox (focused) -->
<div class="a" style="left:143px;top:408px;width:471px;height:24px;background:#fff;border:1.500px solid #0a69c4;border-radius:3px"></div>
<div class="a" style="left:149px;top:411.300px;width:35.500px;height:15.700px;background:#0067c0"></div>
<div class="a" style="left:184.500px;top:411.300px;width:1.200px;height:15.700px;background:#000"></div>
<svg class="chev" style="left:598px;top:417px" width="11" height="7" viewBox="0 0 11 7" fill="none" stroke="#5a5a5a" stroke-width="1.100"><path id="chv" d="M1 1l4.500 4.500L10 1"/></svg>
<!-- profiles button -->
<div class="btn" style="left:144px;top:463px;width:194px;height:26px"></div>
<!-- update mode -->
<div class="cmb" style="left:358px;top:462px;width:256px;height:24px"></div>
<svg style="left:598px;top:471px" width="11" height="7" viewBox="0 0 11 7" fill="none" stroke="#5a5a5a" stroke-width="1.100"><use href="#chv"/></svg>
<!-- group boxes -->
<div class="grp" style="left:143px;top:516px;width:196px;height:49px"></div>
<div class="a" style="left:149px;top:514px;width:90px;height:5px;background:#f9f9f9"></div>
<div class="grp" style="left:358px;top:516px;width:256px;height:167px"></div>
<div class="a" style="left:364px;top:514px;width:103px;height:5px;background:#f9f9f9"></div>
<!-- radios -->
<div class="rd" style="left:152.500px;top:534px"></div>
<div class="rd" style="left:213.800px;top:534px"></div>
<div class="rd" style="left:278.800px;top:534px;border:4.800px solid #0560b6;background:#fff"></div>
<!-- checkboxes -->
<div class="cb" style="left:370px;top:534.200px"></div>
<div class="cb" style="left:370px;top:558.200px"></div>
<div class="cb d" style="left:370px;top:582.200px"></div>
<div class="cb d" style="left:370px;top:606.200px"></div>
<div class="cb" style="left:370px;top:630.200px"></div>
<div class="cb d" style="left:370px;top:654.200px"></div>
<!-- compression / dictionary combos -->
<div class="cmb" style="left:143px;top:598px;width:196px;height:24px"></div>
<svg style="left:322.500px;top:607px" width="11" height="7" viewBox="0 0 11 7" fill="none" stroke="#5a5a5a" stroke-width="1.100"><use href="#chv"/></svg>
<div class="cmb" style="left:143px;top:656px;width:196px;height:24px"></div>
<svg style="left:322.500px;top:665px" width="11" height="7" viewBox="0 0 11 7" fill="none" stroke="#5a5a5a" stroke-width="1.100"><use href="#chv"/></svg>
<!-- split volumes -->
<div class="cmb" style="left:143px;top:714px;width:140px;height:24px;border-color:#8a8a8a;border-radius:2px;background:#fff"></div>
<svg style="left:266.500px;top:723px" width="11" height="7" viewBox="0 0 11 7" fill="none" stroke="#5a5a5a" stroke-width="1.100"><use href="#chv"/></svg>
<div class="cmb" style="left:286px;top:714px;width:53px;height:24px"></div>
<svg style="left:322.500px;top:723px" width="11" height="7" viewBox="0 0 11 7" fill="none" stroke="#5a5a5a" stroke-width="1.100"><use href="#chv"/></svg>
<!-- set password -->
<div class="btn" style="left:359px;top:713px;width:254px;height:26px"></div>
<!-- bottom buttons -->
<div class="btn" style="left:357px;top:781px;width:86px;height:26px;border:1.500px solid #0a69c4"></div>
<div class="btn" style="left:452px;top:781px;width:86px;height:26px"></div>
<div class="btn" style="left:547px;top:781px;width:86px;height:26px"></div>
<span class="t" id="t42" style="left:149.20px;top:307.10px;font-size:15px;color:#000;letter-spacing:-0.131px;">Archive name and parameters</span>
<span class="t" id="t43" style="left:129.00px;top:345.03px;font-size:12.6px;color:#000;letter-spacing:-0.145px;-webkit-text-stroke-width:0.22px;">General</span>
<span class="t" id="t44" style="left:185.10px;top:346.93px;font-size:12.6px;color:#000;letter-spacing:-0.152px;-webkit-text-stroke-width:0.22px;">Advanced</span>
<span class="t" id="t45" style="left:252.20px;top:346.93px;font-size:12.6px;color:#000;letter-spacing:-0.029px;-webkit-text-stroke-width:0.22px;">Options</span>
<span class="t" id="t46" style="left:307.10px;top:346.93px;font-size:12.6px;color:#000;letter-spacing:-0.119px;-webkit-text-stroke-width:0.22px;">Files</span>
<span class="t" id="t47" style="left:355.20px;top:346.93px;font-size:12.6px;color:#000;letter-spacing:-0.469px;-webkit-text-stroke-width:0.22px;">Backup</span>
<span class="t" id="t48" style="left:407.20px;top:346.93px;font-size:12.6px;color:#000;letter-spacing:0.242px;-webkit-text-stroke-width:0.22px;">Time</span>
<span class="t" id="t49" style="left:455.10px;top:346.93px;font-size:12.6px;color:#000;letter-spacing:0.087px;-webkit-text-stroke-width:0.22px;">Comment</span>
<span class="t" id="t50" style="left:143.30px;top:384.93px;font-size:12.6px;color:#000;letter-spacing:0.033px;-webkit-text-stroke-width:0.22px;">Archive name</span>
<span class="t" id="t51" style="left:543.10px;top:381.13px;font-size:12.6px;color:#000;letter-spacing:0.089px;-webkit-text-stroke-width:0.22px;">Browse...</span>
<span class="t" id="t52" style="left:149.60px;top:410.03px;font-size:12.6px;color:#fff;letter-spacing:-0.097px;-webkit-text-stroke-width:0.22px;">AP.zip</span>
<span class="t" id="t53" style="left:143.30px;top:443.13px;font-size:12.6px;color:#000;letter-spacing:0.019px;-webkit-text-stroke-width:0.22px;">Default Profile</span>
<span class="t" id="t54" style="left:358.50px;top:443.13px;font-size:12.6px;color:#000;letter-spacing:-0.030px;-webkit-text-stroke-width:0.22px;">Update mode</span>
<span class="t" id="t55" style="left:214.20px;top:467.23px;font-size:12.6px;color:#000;letter-spacing:0.073px;-webkit-text-stroke-width:0.22px;">Profiles...</span>
<span class="t" id="t56" style="left:362.00px;top:465.03px;font-size:12.6px;color:#000;letter-spacing:0.132px;-webkit-text-stroke-width:0.22px;">Add and replace files</span>
<span class="t" id="t57" style="left:152.20px;top:506.53px;font-size:12.6px;color:#000;letter-spacing:0.187px;-webkit-text-stroke-width:0.22px;">Archive format</span>
<span class="t" id="t58" style="left:367.00px;top:506.53px;font-size:12.6px;color:#000;letter-spacing:0.076px;-webkit-text-stroke-width:0.22px;">Archiving options</span>
<span class="t" id="t59" style="left:172.40px;top:533.03px;font-size:12.6px;color:#000;letter-spacing:-0.998px;-webkit-text-stroke-width:0.22px;">RAR</span>
<span class="t" id="t60" style="left:233.60px;top:533.03px;font-size:12.6px;color:#000;letter-spacing:-0.998px;-webkit-text-stroke-width:0.22px;">RAR4</span>
<span class="t" id="t61" style="left:298.20px;top:533.03px;font-size:12.6px;color:#000;letter-spacing:-0.665px;-webkit-text-stroke-width:0.22px;">ZIP</span>
<span class="t" id="t62" style="left:389.50px;top:533.03px;font-size:12.6px;color:#000;letter-spacing:0.125px;-webkit-text-stroke-width:0.22px;">Delete files after archiving</span>
<span class="t" id="t63" style="left:389.50px;top:557.03px;font-size:12.6px;color:#000;letter-spacing:-0.027px;-webkit-text-stroke-width:0.22px;">Create SFX archive</span>
<span class="t" id="t64" style="left:389.50px;top:580.93px;font-size:12.6px;color:#838383;letter-spacing:0.045px;-webkit-text-stroke-width:0.22px;">Create solid archive</span>
<span class="t" id="t65" style="left:389.50px;top:604.93px;font-size:12.6px;color:#838383;letter-spacing:0.089px;-webkit-text-stroke-width:0.22px;">Add recovery record</span>
<span class="t" id="t66" style="left:389.50px;top:628.93px;font-size:12.6px;color:#000;letter-spacing:0.206px;-webkit-text-stroke-width:0.22px;">Test archived files</span>
<span class="t" id="t67" style="left:389.50px;top:652.93px;font-size:12.6px;color:#838383;letter-spacing:-0.109px;-webkit-text-stroke-width:0.22px;">Lock archive</span>
<span class="t" id="t68" style="left:143.30px;top:576.93px;font-size:12.6px;color:#000;letter-spacing:0.039px;-webkit-text-stroke-width:0.22px;">Compression method</span>
<span class="t" id="t69" style="left:147.50px;top:600.83px;font-size:12.6px;color:#000;letter-spacing:-0.016px;-webkit-text-stroke-width:0.22px;">Normal</span>
<span class="t" id="t70" style="left:143.30px;top:634.93px;font-size:12.6px;color:#000;letter-spacing:-0.019px;-webkit-text-stroke-width:0.22px;">Dictionary size</span>
<span class="t" id="t71" style="left:147.50px;top:658.83px;font-size:12.6px;color:#000;letter-spacing:-0.502px;-webkit-text-stroke-width:0.22px;">32 KB</span>
<span class="t" id="t72" style="left:143.30px;top:693.23px;font-size:12.6px;color:#000;letter-spacing:0.096px;-webkit-text-stroke-width:0.22px;">Split to volumes, size</span>
<span class="t" id="t73" style="left:290.20px;top:716.93px;font-size:12.6px;color:#000;letter-spacing:-1.245px;-webkit-text-stroke-width:0.22px;">MB</span>
<span class="t" id="t74" style="left:441.30px;top:716.93px;font-size:12.6px;color:#000;letter-spacing:0.173px;-webkit-text-stroke-width:0.22px;">Set password...</span>
<span class="t" id="t75" style="left:392.30px;top:784.93px;font-size:12.6px;color:#000;letter-spacing:-1.352px;-webkit-text-stroke-width:0.22px;">OK</span>
<span class="t" id="t76" style="left:476.30px;top:784.93px;font-size:12.6px;color:#000;letter-spacing:-0.284px;-webkit-text-stroke-width:0.22px;">Cancel</span>
<span class="t" id="t77" style="left:577.10px;top:784.93px;font-size:12.6px;color:#000;letter-spacing:-0.277px;-webkit-text-stroke-width:0.22px;">Help</span>

</body></html>
